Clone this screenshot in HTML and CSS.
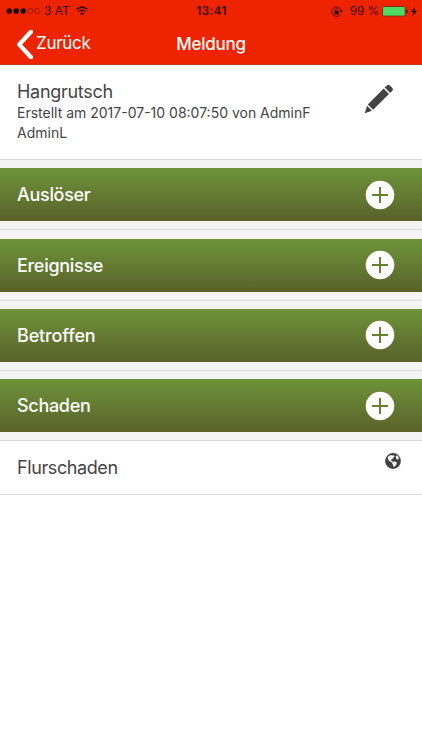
FILE: index.html
```html
<!DOCTYPE html>
<html lang="de">
<head>
<meta charset="utf-8">
<title>Meldung</title>
<link rel="stylesheet" href="styles.css">
</head>
<body>
<header class="header">
  <div class="status">
    <div class="carrier">
      <svg class="signal" width="35" height="8" viewBox="0 0 35 8"><g fill="#1c0500"><circle cx="3.2" cy="4" r="2.8"/><circle cx="10.2" cy="4" r="2.8"/><circle cx="17.3" cy="4" r="2.8"/></g><g fill="none" stroke="#7d1000" stroke-width=".7"><circle cx="24.4" cy="4" r="2.6"/><circle cx="31.4" cy="4" r="2.6"/></g></svg>
      <span>3 AT</span>
      <svg class="wifi" width="12" height="10" viewBox="0 0 12 10"><g fill="none" stroke="#3a0900" stroke-width="1.5"><path d="M.6 3.4Q6-1.2 11.4 3.4M2.6 5.7Q6 2.8 9.4 5.7"/></g><path d="M4 7.3Q6 5.8 8 7.3L6 9.4Z" fill="#3a0900"/></svg>
    </div>
    <span class="clock">13:41</span>
    <div class="power">
      <svg class="lock" width="12" height="11" viewBox="0 0 12 11"><path d="M9.4 8.4A4.7 4.7 0 1 1 9.9 4" fill="none" stroke="#3a0900" stroke-width=".8"/><path d="M8.7 4.6h3L10.2 6.7ZM3.4 4.9h4.2v3.3H3.4Z" fill="#1c0500"/><path d="M4.3 5V3.9a1.2 1.2 0 0 1 2.4 0V5" fill="none" stroke="#1c0500" stroke-width=".8"/></svg>
      <span class="percent">99 %</span>
      <svg class="battery" width="26" height="11" viewBox="0 0 26 11"><rect x=".5" y=".5" width="22.7" height="9.6" rx="1.4" fill="#4cd964" stroke="#7c3011" stroke-width="1"/><path d="M24 3.5q1.5.2 1.5 1.8T24 7.1Z" fill="#3a0900"/></svg>
      <svg class="bolt" width="6" height="9" viewBox="0 0 6 9"><path d="M3.8 0 0 5h2.4L1.6 9 6 3.7H3.5Z" fill="#1c0500"/></svg>
    </div>
  </div>
  <nav class="nav">
    <a class="back"><svg width="17" height="29" viewBox="0 0 17 29"><path d="M15 1.8 3.2 14.5 15 27.2" fill="none" stroke="#fff" stroke-width="4.2" stroke-linejoin="round" stroke-linecap="round"/></svg><span>Zurück</span></a>
    <h1 class="title">Meldung</h1>
  </nav>
</header>
<main>
  <section class="report">
    <div class="report-text">
      <h2>Hangrutsch</h2>
      <p>Erstellt am 2017-07-10 08:07:50 von AdminF<br>AdminL</p>
    </div>
    <svg class="pencil" width="30" height="30" viewBox="0 0 30 30"><g fill="#444"><path d="M.7 29.2 3.1 21.8 8 26.8Z"/><path d="M3.8 20.5 19.7 4.6 25 9.9 9.1 25.8Z"/><path d="M20.7 3.5 23 1.4q1.4-1.2 2.8 0l2.6 2.6q1.2 1.4 0 2.8L26.1 9Z"/></g></svg>
  </section>
  <div class="group"><div class="bar"><span>Auslöser</span><svg width="30" height="30" viewBox="0 0 30 30"><circle cx="15" cy="15" r="14.3" fill="#fff"/><path d="M7 15h16M15 7v16" stroke="#67802f" stroke-width="2"/></svg></div></div>
  <div class="group"><div class="bar"><span>Ereignisse</span><svg width="30" height="30" viewBox="0 0 30 30"><circle cx="15" cy="15" r="14.3" fill="#fff"/><path d="M7 15h16M15 7v16" stroke="#67802f" stroke-width="2"/></svg></div></div>
  <div class="group"><div class="bar"><span class="close">Betroffen</span><svg width="30" height="30" viewBox="0 0 30 30"><circle cx="15" cy="15" r="14.3" fill="#fff"/><path d="M7 15h16M15 7v16" stroke="#67802f" stroke-width="2"/></svg></div></div>
  <div class="group"><div class="bar"><span>Schaden</span><svg width="30" height="30" viewBox="0 0 30 30"><circle cx="15" cy="15" r="14.3" fill="#fff"/><path d="M7 15h16M15 7v16" stroke="#67802f" stroke-width="2"/></svg></div></div>
  <div class="entry"><span>Flurschaden</span><svg class="globe" width="16" height="16" viewBox="0 0 16 16"><circle cx="8" cy="8" r="7.9" fill="#414141"/><path d="M3.2 3.4 5.6 2l1.6.8L8.6 2l1 1.4-1.2.8-.4 1.4-1.8.8-.4 1.2 2 .6-.8 1.2-2-.8L3.4 7 2.6 5ZM10.8 3l1.4-.4 1.6 2-.2 1.4-1.4.4-1.2-1.2ZM7.6 9l2.4-.4 2 1.2-.8 2-1.8 2-1.2-.4-.2-2-1-1Z" fill="#fff"/></svg></div>
</main>
</body>
</html>
```
FILE: styles.css
```css
* { box-sizing: border-box; }
body { margin: 0; background: #fff; color: #444; font-family: Inter, "Liberation Sans", sans-serif; }
svg { display: block; flex: none; }
h1, h2, p { margin: 0; font-weight: 400; }
.header { height: 65px; background: #ee2400; border-bottom: 1px solid #c63424; }
.status { display: grid; grid-template-columns: 1fr auto 1fr; align-items: center; height: 22px; padding: 0 5px 0 6px; font-size: 12px; line-height: 22px; color: #3a0900; }
.carrier, .power { display: flex; align-items: center; }
.carrier span { margin: 0 6px 0 3px; }
.clock { font-weight: 600; letter-spacing: .3px; }
.power { justify-content: flex-end; }
.percent { margin: 0 3px 0 7px; letter-spacing: -.2px; }
.bolt { margin-left: 3px; }
.nav { display: grid; grid-template-columns: 1fr auto 1fr; align-items: center; height: 42px; color: #fff; font-size: 17px; }
.back { display: flex; align-items: center; padding: 3px 0 0 16px; letter-spacing: -.3px; }
.back span { margin: -4px 0 0 3px; }
.title { padding-top: 1px; font-size: 17px; font-weight: 500; letter-spacing: -.25px; }
.report { display: flex; justify-content: space-between; height: 95px; padding: 16px 28px 0 17px; border-bottom: 1px solid #dadada; }
.report h2 { font-size: 18px; line-height: 22px; letter-spacing: -.3px; }
.report p { font-size: 14px; line-height: 20px; }
.pencil { margin-top: 3px; }
.group { height: 70.25px; padding-top: 8.3px; background: #f4f4f4; border-bottom: 1px solid #dadada; }
.bar { display: flex; justify-content: space-between; align-items: center; height: 53px; padding: 0 27px 0 17px; background: linear-gradient(#6e943a, #5a612a); color: #fff; font-size: 18px; font-weight: 500; letter-spacing: -.3px; }
.close { letter-spacing: -.15px; }
.entry { display: flex; justify-content: space-between; height: 54px; padding: 12px 21px 0 17px; border-bottom: 1px solid #dadada; font-size: 18px; line-height: 30px; letter-spacing: -.4px; }
```
